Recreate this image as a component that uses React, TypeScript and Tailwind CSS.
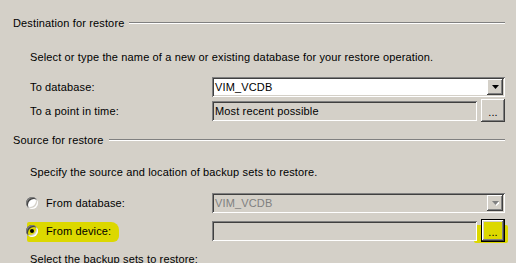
import React from 'react';

const sunken =
  'shadow-[inset_1px_1px_0_#808080,inset_-1px_-1px_0_#ffffff,inset_2px_2px_0_#404040,inset_-2px_-2px_0_#d4d0c8]';
const raised =
  'shadow-[inset_-1px_-1px_0_#404040,inset_1px_1px_0_#ffffff,inset_-2px_-2px_0_#808080,inset_2px_2px_0_#d4d0c8]';

function GroupHeader({ title }: { title: string }) {
  return (
    <div className="flex items-center h-[14px] pl-[13px] pr-[11px]">
      <span className="whitespace-nowrap">{title}</span>
      <div className="flex-1 ml-[5px] h-[2px] border-t border-t-[#808080] border-b border-b-white" />
    </div>
  );
}

function Combo({ value, disabled }: { value: string; disabled?: boolean }) {
  return (
    <div
      className={`relative flex items-center w-[293px] h-[20px] p-[2px] ${sunken} ${
        disabled ? 'bg-[#d4d0c8]' : 'bg-white'
      }`}
    >
      <span
        className={`flex-1 pl-[1px] leading-[16px] ${
          disabled ? 'text-[#808080]' : 'text-black'
        }`}
      >
        {value}
      </span>
      <div
        className={`flex items-center justify-center w-[16px] h-[16px] bg-[#d4d0c8] ${raised}`}
      >
        <svg width="7" height="5" viewBox="0 0 7 5">
          {disabled && <polygon points="1,1 8,1 4.5,5" fill="#ffffff" />}
          <polygon points="0,0 7,0 3.5,4" fill={disabled ? '#808080' : '#000000'} />
        </svg>
      </div>
    </div>
  );
}

function TextBox({ value }: { value?: string }) {
  return (
    <div className={`flex items-center w-[265px] h-[20px] p-[2px] bg-[#d4d0c8] ${sunken}`}>
      <span className="pl-[1px] leading-[16px]">{value}</span>
    </div>
  );
}

function DotsButton({ focused }: { focused?: boolean }) {
  if (focused) {
    return (
      <div className="w-[24px] h-[23px] border border-black">
        <div className={`flex items-end justify-center w-full h-full pb-[4px] bg-[#dcd800] ${raised}`}>
          <span className="leading-[10px]">...</span>
        </div>
      </div>
    );
  }
  return (
    <div className={`flex items-end justify-center w-[24px] h-[23px] pb-[5px] bg-[#d4d0c8] ${raised}`}>
      <span className="leading-[10px]">...</span>
    </div>
  );
}

function Radio({ checked }: { checked?: boolean }) {
  return (
    <div
      className={`flex items-center justify-center w-[12px] h-[12px] rounded-full ${
        checked ? 'bg-transparent' : 'bg-white'
      } shadow-[inset_1px_1px_0_#808080,inset_-1px_-1px_0_#ffffff,inset_2px_2px_0_#404040,inset_-2px_-2px_0_#d4d0c8]`}
    >
      {checked && <div className="w-[4px] h-[4px] rounded-full bg-black" />}
    </div>
  );
}

export default function App() {
  return (
    <div
      className="relative w-[516px] h-[263px] overflow-hidden bg-[#d4d0c8] text-black text-[11px] leading-[14px] tracking-[0.14px] pt-[16px]"
      style={{ fontFamily: '"Liberation Sans", Arial, sans-serif' }}
    >
      {/* marker highlights drawn over the screenshot */}
      <div className="absolute left-[27px] top-[222px] w-[92px] h-[20px] bg-[#dcd800] rounded-[2px_8px_6px_2px]" />
      <div className="absolute left-[474px] top-[225px] w-[34px] h-[18px] bg-[#dcd800] rounded-[2px]" />

      <div className="relative">
        <GroupHeader title="Destination for restore" />

        <div className="mt-[20px] h-[14px] pl-[30px] whitespace-nowrap">
          Select or type the name of a new or existing database for your restore operation.
        </div>

        <div className="mt-[13px] flex items-center h-[20px]">
          <div className="w-[212px] pl-[30px]">To database:</div>
          <Combo value="VIM_VCDB" />
        </div>

        <div className="mt-[2px] flex items-center h-[23px]">
          <div className="w-[212px] pl-[30px]">To a point in time:</div>
          <TextBox value="Most recent possible" />
          <div className="ml-[4px]">
            <DotsButton />
          </div>
        </div>

        <div className="mt-[11px]">
          <GroupHeader title="Source for restore" />
        </div>

        <div className="mt-[18px] h-[14px] pl-[30px] whitespace-nowrap">
          Specify the source and location of backup sets to restore.
        </div>

        <div className="mt-[14px] flex items-center h-[20px]">
          <div className="w-[212px] pl-[26px] flex items-center gap-[8px]">
            <Radio />
            <span>From database:</span>
          </div>
          <Combo value="VIM_VCDB" disabled />
        </div>

        <div className="mt-[6px] flex items-center h-[23px]">
          <div className="w-[212px] pl-[26px] flex items-center gap-[8px]">
            <Radio checked />
            <span>From device:</span>
          </div>
          <TextBox />
          <div className="ml-[4px]">
            <DotsButton focused />
          </div>
        </div>

        <div className="mt-[10px] h-[14px] pl-[30px] whitespace-nowrap">
          Select the backup sets to restore:
        </div>
      </div>
    </div>
  );
}
